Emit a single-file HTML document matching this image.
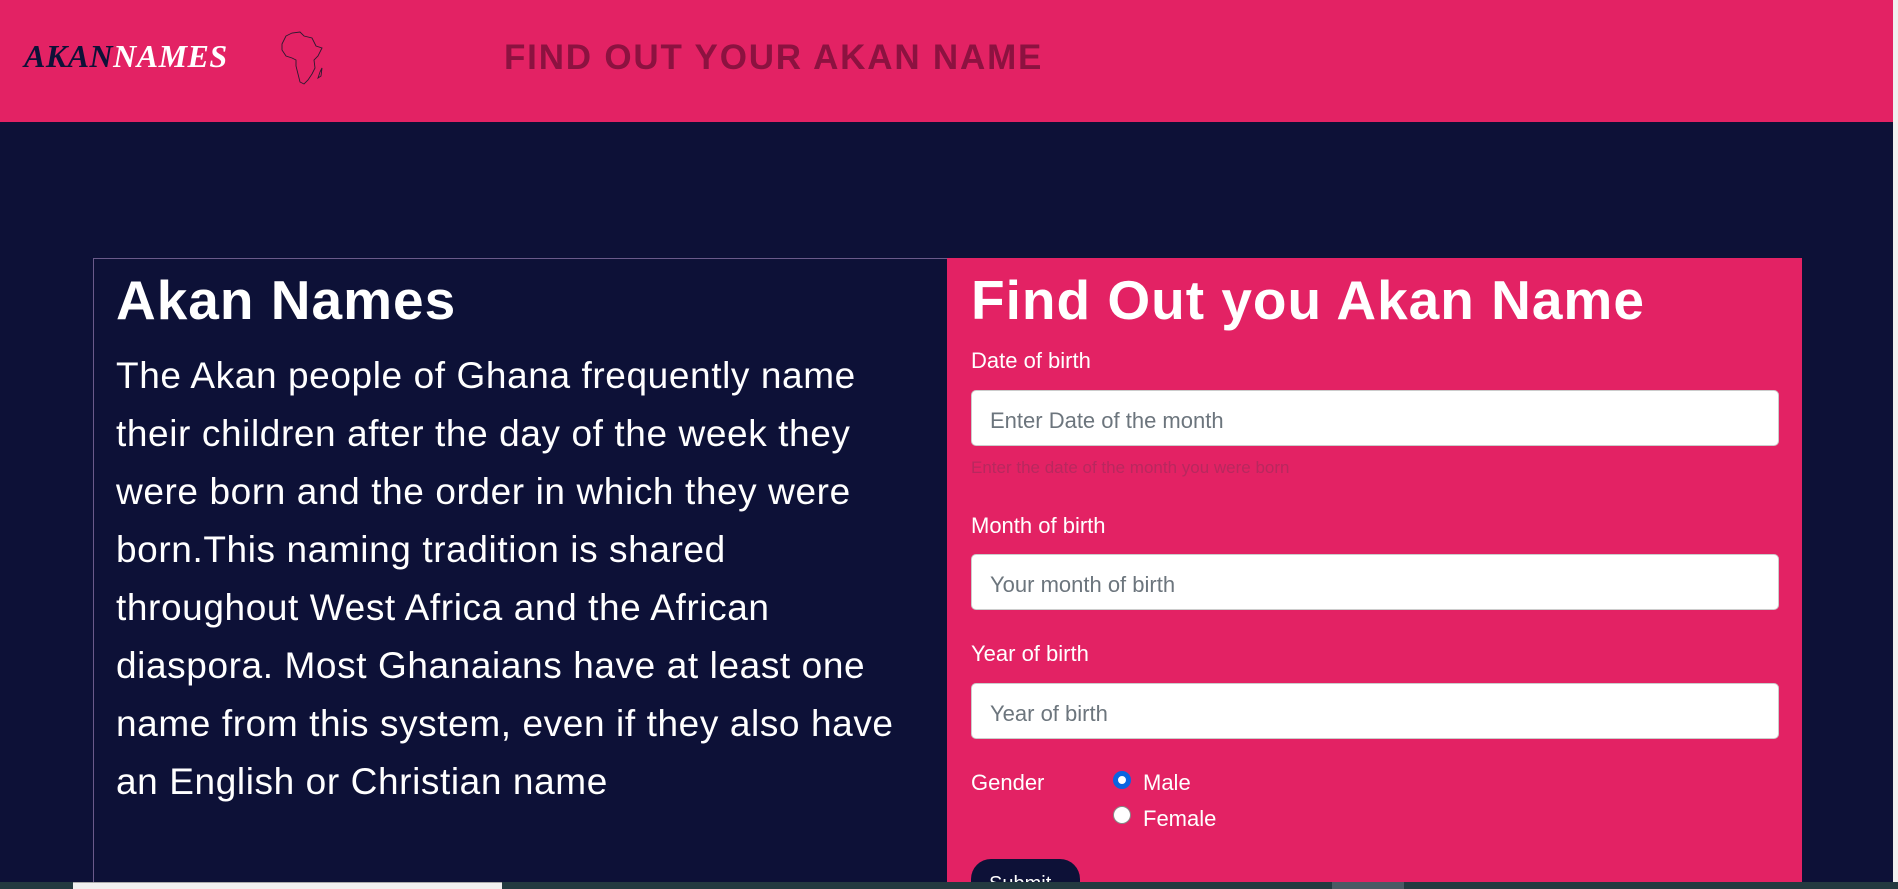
<!DOCTYPE html>
<html><head><meta charset="utf-8"><style>
*{margin:0;padding:0;box-sizing:border-box}
html,body{width:1898px;height:889px;overflow:hidden;background:#0d1137;font-family:"Liberation Sans","DejaVu Sans",sans-serif;position:relative}
.hdr{position:absolute;left:0;top:0;width:1893px;height:122px;background:#e32264}
.rs{position:absolute;left:1893px;top:0;width:5px;height:882px;background:#f0f0f0}
.logo{position:absolute;left:24px;top:38px;font-family:"Liberation Serif",serif;font-style:italic;font-weight:bold;font-size:32px;letter-spacing:0.5px}
.logo .a{color:#0d1137}.logo .b{color:#fff}
.title{position:absolute;left:504px;top:38px;font-size:35px;font-weight:bold;color:#8c1240;letter-spacing:1.8px}
.lbox{position:absolute;left:93px;top:258px;width:855px;height:640px;border-left:1px solid #6a5a8a;border-top:1px solid #6a5a8a}
.pink{position:absolute;left:947px;top:258px;width:855px;height:640px;background:#e32264}
h1{position:absolute;color:#fff;font-size:55px;font-weight:bold;letter-spacing:1px}
.p{position:absolute;left:116px;top:347px;width:800px;color:#fff;font-size:37px;letter-spacing:0.6px;line-height:58px}
.lab{position:absolute;left:971px;color:#fff;font-size:22px}
.inp{position:absolute;left:971px;width:808px;height:56px;background:#fff;border-radius:5px;border:1px solid #ccc;color:#6c757d;font-size:22px;padding:17px 18px 0}
.help{position:absolute;left:971px;top:458px;font-size:17px;color:#b8285e}
.radio{position:absolute;left:1113px;width:18px;height:18px;border-radius:50%;background:#fff;border:1px solid #888}
.radio.on{border:5px solid #0a64e0}
.btn{position:absolute;left:971px;top:859px;width:109px;height:40px;border-radius:20px 20px 0 0;background:#0d1137;color:#fff;font-size:20px;padding:14px 0 0 18px}
.tb{position:absolute;left:0;top:882px;width:1898px;height:7px;background:#233a40}
</style></head><body>
<div class="hdr">
<div class="logo"><span class="a">AKAN</span><span class="b">NAMES</span></div>
<svg style="position:absolute;left:280px;top:30px" width="46" height="56" viewBox="0 0 46 56"><path d="M6 6 L12 3 L20 2 L24 6 L32 8 L34 12 L36 16 L42 18 L38 26 L34 30 L35 38 L32 44 L28 50 L24 54 L20 52 L18 44 L16 36 L16 30 L12 28 L6 26 L2 20 L2 14 Z M40 42 L42 38 L41 46 L38 48 Z" fill="none" stroke="#2a1a30" stroke-width="0.9"/></svg>
<div class="title">FIND OUT YOUR AKAN NAME</div>
</div>
<div class="rs"></div>
<div class="lbox"></div>
<div class="pink"></div>
<h1 style="left:116px;top:268px">Akan Names</h1>
<div class="p">The Akan people of Ghana frequently name their children after the day of the week they were born and the order in which they were born.This naming tradition is shared throughout West Africa and the African diaspora. Most Ghanaians have at least one name from this system, even if they also have an English or Christian name</div>
<h1 style="left:971px;top:268px">Find Out you Akan Name</h1>
<div class="lab" style="top:348px">Date of birth</div>
<div class="inp" style="top:390px">Enter Date of the month</div>
<div class="help">Enter the date of the month you were born</div>
<div class="lab" style="top:513px">Month of birth</div>
<div class="inp" style="top:554px">Your month of birth</div>
<div class="lab" style="top:641px">Year of birth</div>
<div class="inp" style="top:683px">Year of birth</div>
<div class="lab" style="top:770px">Gender</div>
<div class="radio on" style="top:771px"></div>
<div class="lab" style="left:1143px;top:770px">Male</div>
<div class="radio" style="top:806px"></div>
<div class="lab" style="left:1143px;top:806px">Female</div>
<div class="btn">Submit</div>
<div class="tb"><div style="position:absolute;left:73px;top:0;width:429px;height:7px;background:#f0f0f0;border-top:1px solid #aaa"></div><div style="position:absolute;left:1332px;top:0;width:72px;height:7px;background:#4a5a64"></div></div>
</body></html>
